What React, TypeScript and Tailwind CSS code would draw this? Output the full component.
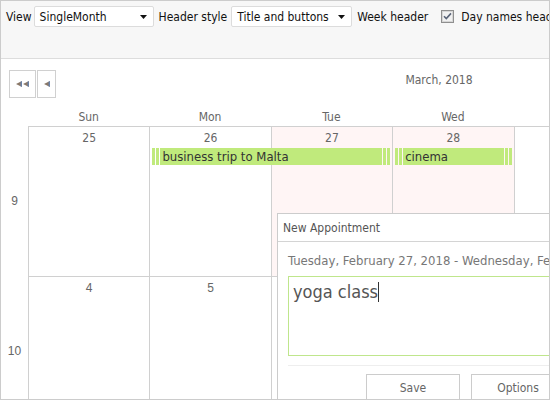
import React from 'react'

const font = { fontFamily: '"DejaVu Sans Condensed", "DejaVu Sans", sans-serif' }

function FakeSelect({ value, width }: { value: string; width: string }) {
  return (
    <div className={`${width} h-[21px] shrink-0 flex items-center justify-between pl-[5px] pr-[6px] bg-white border border-[#dcdcdc] rounded-[2px] text-[#111]`}>
      <span>{value}</span>
      <svg width="7" height="4" viewBox="0 0 7 4">
        <path d="M0 0h7L3.5 4z" fill="#111" />
      </svg>
    </div>
  )
}

function Checkbox() {
  return (
    <svg width="13" height="13" viewBox="0 0 13 13" className="shrink-0">
      <rect x="0.5" y="0.5" width="12" height="12" fill="#e9e9e9" stroke="#8f8f8f" />
      <rect x="1.5" y="1.5" width="10" height="10" fill="#f1f1f1" stroke="#d6d6d6" />
      <path d="M3 6.2l2.3 2.4L10 3.4" fill="none" stroke="#5a6478" strokeWidth="1.6" />
    </svg>
  )
}

function NavArrow() {
  return (
    <svg width="6" height="6" viewBox="0 0 6 6">
      <path d="M0 3L6 0v6z" fill="#8a7868" />
      <path d="M5.2 0.4v5.2" stroke="#5b88c8" strokeWidth="1" />
    </svg>
  )
}

function Stripes() {
  return (
    <>
      <div className="w-[3px] bg-[#c0ea7c]" />
      <div className="w-px" />
      <div className="w-[3px] bg-[#c0ea7c]" />
      <div className="w-px" />
    </>
  )
}

function EventBar({ text, cls }: { text: string; cls: string }) {
  return (
    <div className={`${cls} row-start-1 self-start mt-[22px] h-[17px] flex z-10`}>
      <Stripes />
      <div className="flex-1 bg-[#c0ea7c] text-[13px] leading-[17px] text-[#333] pl-[2px] whitespace-nowrap overflow-hidden">
        {text}
      </div>
      <div className="w-px" />
      <div className="w-[3px] bg-[#c0ea7c]" />
      <div className="w-px" />
      <div className="w-[3px] bg-[#c0ea7c]" />
    </div>
  )
}

const cols = 'grid grid-cols-[27px_repeat(7,121.4px)]'

const dayNames = ['Sun', 'Mon', 'Tue', 'Wed', 'Thu', 'Fri', 'Sat']

export default function App() {
  const row1 = ['25', '26', '27', '28', '1', '2', '3']
  const row2 = ['4', '5', '6', '7', '8', '9', '10']
  const colStart = ['col-start-2', 'col-start-3', 'col-start-4', 'col-start-5', 'col-start-6', 'col-start-7', 'col-start-8']

  return (
    <div className="w-[550px] h-[400px] border border-[#cccccc] overflow-hidden relative bg-white" style={font}>
      {/* Toolbar */}
      <div className="h-[58px] bg-[#f7f7f7] border-b border-[#dddddd] flex items-start pt-[5px] pl-[5px] text-[12px] text-[#111] whitespace-nowrap">
        <div className="flex items-center h-[21px]">
          <span className="mr-[2px]">View</span>
          <FakeSelect value="SingleMonth" width="w-[120px]" />
          <span className="ml-[5px] mr-[4px]">Header style</span>
          <FakeSelect value="Title and buttons" width="w-[121px]" />
          <span className="ml-[5px]">Week header</span>
          <span className="ml-[13px] mr-[7px] flex"><Checkbox /></span>
          <span>Day names header</span>
        </div>
      </div>

      {/* Calendar */}
      <div className="w-[876px]">
        <div className="h-[49px] grid grid-cols-[1fr_auto_1fr] items-start">
          <div className="flex pt-[11px] pl-[8px] gap-px">
            <button className="w-[27px] h-[28px] border border-[#d0d0d0] bg-white flex items-center justify-center gap-px">
              <NavArrow />
              <NavArrow />
            </button>
            <button className="w-[19px] h-[28px] border border-[#d0d0d0] bg-white flex items-center justify-center">
              <NavArrow />
            </button>
          </div>
          <div className="pt-[13px] text-[12px] leading-[16px] text-[#666]">March, 2018</div>
          <div />
        </div>

        <div className={`${cols} h-[18px] text-[12px] leading-[19px] text-[#666]`}>
          <div />
          {dayNames.map((d) => (
            <div key={d} className="text-center">{d}</div>
          ))}
        </div>

        <div className={`${cols} grid-rows-[150px]`}>
          <div className="row-start-1 col-start-1 flex items-center justify-center text-[12px] text-[#666]" style={{ fontFamily: '"Liberation Sans", sans-serif' }}>9</div>
          {row1.map((n, i) => (
            <div
              key={n}
              className={`${colStart[i]} row-start-1 border-l border-t border-[#d0d0d0] pt-[4px] text-center text-[12px] leading-[14px] text-[#666] ${i === 2 || i === 3 ? 'bg-[#fff5f5]' : 'bg-white'}`}
            >
              {n}
            </div>
          ))}
          <EventBar text="business trip to Malta" cls="col-start-3 col-end-5 ml-[3px] mr-[2px]" />
          <EventBar text="cinema" cls="col-start-5 col-end-6 ml-[3px] mr-[2px]" />
        </div>

        <div className={`${cols} grid-rows-[150px]`}>
          <div className="row-start-1 col-start-1 flex items-center justify-center text-[12px] text-[#666]" style={{ fontFamily: '"Liberation Sans", sans-serif' }}>10</div>
          {row2.map((n, i) => (
            <div
              key={n}
              className={`${colStart[i]} row-start-1 border-l border-t border-[#d0d0d0] pt-[4px] text-center text-[12px] leading-[14px] text-[#666]`}
              style={{ fontFamily: '"Liberation Sans", sans-serif' }}
            >
              {n}
            </div>
          ))}
        </div>
      </div>

      {/* New appointment popup */}
      <div className="absolute left-[276px] top-[212px] w-[420px] h-[260px] bg-white border border-[#cccccc]">
        <div className="h-[28px] border-b border-[#d4d4d4] pl-[5px] flex items-center text-[12px] text-[#555]">
          New Appointment
        </div>
        <div className="px-[10px]">
          <div className="pt-[11px] text-[13px] leading-[15px] text-[#777] whitespace-nowrap">
            Tuesday, February 27, 2018 - Wednesday, February 28, 2018
          </div>
          <div className="mt-[8px] h-[80px] border border-[#bfe68c] pl-[4px] pt-[4px] text-[18px] leading-[22px] text-[#555] flex items-start">
            <span>yoga class</span>
            <span className="inline-block w-px h-[20px] bg-[#333] mt-px" />
          </div>
          <div className="mt-[9px] h-px bg-[#eeeeee]" />
          <div className="mt-[8px] flex gap-[11px] pl-[78px]">
            <button className="w-[94px] h-[28px] border border-[#cccccc] bg-white text-[12px] text-[#666]">Save</button>
            <button className="w-[94px] h-[28px] border border-[#cccccc] bg-white text-[12px] text-[#666]">Options</button>
          </div>
        </div>
      </div>
    </div>
  )
}
